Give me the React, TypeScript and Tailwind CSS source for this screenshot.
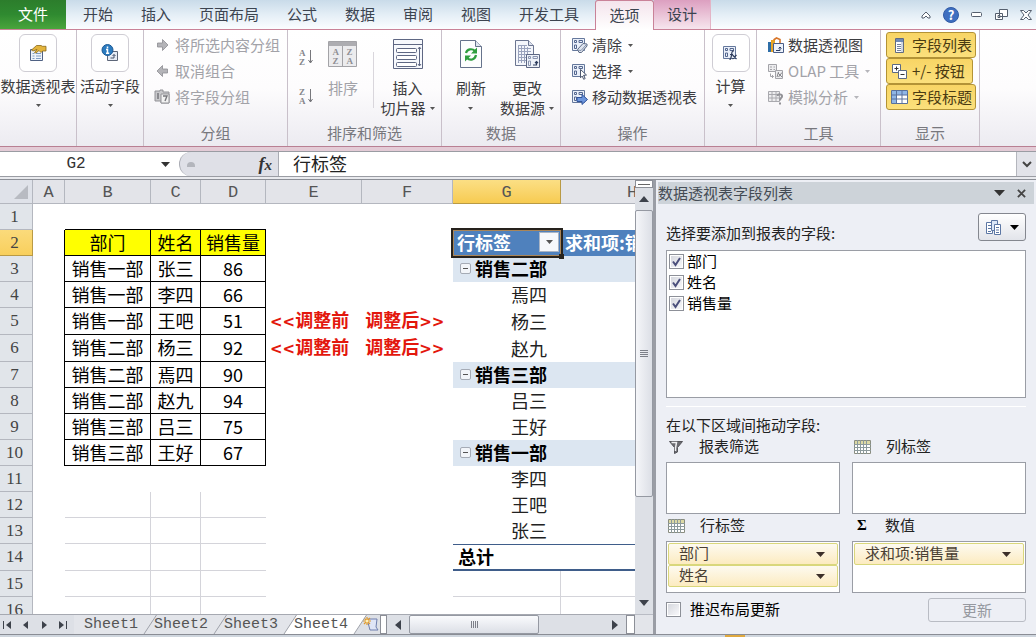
import React, { useState } from 'react';
import clsx from 'clsx';

const TABS = ['开始', '插入', '页面布局', '公式', '数据', '审阅', '视图', '开发工具'];
const SHEETS = ['Sheet1', 'Sheet2', 'Sheet3', 'Sheet4'];
const COLUMNS = ['A', 'B', 'C', 'D', 'E', 'F', 'G', 'H'];
const ROWS = Array.from({ length: 16 }, (_, i) => i + 1);

const SALES: Record<number, [string, string, string]> = {
    2: ['部门', '姓名', '销售量'],
    3: ['销售一部', '张三', '86'],
    4: ['销售一部', '李四', '66'],
    5: ['销售一部', '王吧', '51'],
    6: ['销售二部', '杨三', '92'],
    7: ['销售二部', '焉四', '90'],
    8: ['销售二部', '赵九', '94'],
    9: ['销售三部', '吕三', '75'],
    10: ['销售三部', '王好', '67'],
};

const PIVOT: Record<number, { label: string; group?: boolean }> = {
    3: { label: '销售二部', group: true },
    4: { label: '焉四' },
    5: { label: '杨三' },
    6: { label: '赵九' },
    7: { label: '销售三部', group: true },
    8: { label: '吕三' },
    9: { label: '王好' },
    10: { label: '销售一部', group: true },
    11: { label: '李四' },
    12: { label: '王吧' },
    13: { label: '张三' },
};

/* ---------- small drawings ---------- */

const Caret = ({ className = 'w-[5px] h-[3px] text-[#555]' }: { className?: string }) => (
    <svg viewBox="0 0 10 6" preserveAspectRatio="none" className={clsx('shrink-0', className)} fill="currentColor">
        <path d="M0 0h10L5 6z" />
    </svg>
);

const ArrowIcon = ({ left }: { left?: boolean }) => (
    <svg viewBox="0 0 16 16" className="w-[17px] h-4 shrink-0">
        <path
            d={left ? 'M13 6H8V2.500L2.500 8 8 13.500V10h5z' : 'M3 6h5V2.500L13.500 8 8 13.500V10H3z'}
            fill="#b4b4b8"
            stroke="#8d8d92"
            strokeWidth="0.8"
        />
    </svg>
);

const FieldGroupIcon = () => (
    <svg viewBox="0 0 17 16" className="w-[17px] h-4 shrink-0">
        <path d="M1 2h5v-1h3v2h6v11H7v-2H1z" fill="#c9c9cc" stroke="#929297" />
        <path d="M7 5h8v9H7z" fill="#f2f2f2" stroke="#929297" />
        <path d="M9 7h4l-2 5M3 5h2M3 7h2M3 9h2" stroke="#77777c" strokeWidth="1.4" fill="none" />
    </svg>
);

const PropertiesIcon = () => (
    <svg viewBox="0 0 18 18" className="w-[18px] h-[18px]">
        <path d="M1.500 5.500h12v11h-12z" fill="#eef3fa" stroke="#4f6183" />
        <path d="M3.500 9.500h2M3.500 12h2M3.500 14.500h2M7 9.500h5M7 12h5M7 14.500h5" stroke="#7f9cc4" />
        <path d="M2.500 6l5-4.500H12l1.500.8H17V7h-3.500L12 8.500l-2-2-3 2.500-1.500-.5L8 5.500 4 7z" fill="#e3b43c" stroke="#8a6a1c" strokeWidth="0.8" />
    </svg>
);

const ActiveFieldIcon = () => (
    <svg viewBox="0 0 18 18" className="w-[18px] h-[18px]">
        <path d="M6.500 7.500h10v9h-10z" fill="#e6ecf5" stroke="#5d6678" />
        <path d="M9.500 14h3.500v-3.500M11.500 12l1.500-1.500 1.500 1.500" stroke="#47536a" fill="none" />
        <circle cx="6.500" cy="6" r="5.500" fill="#2c7bbf" stroke="#1d5b96" />
        <path d="M6.500 2.500v1.800M5 5.500h1.500v3.500M5 9.300h3.200" stroke="#fff" strokeWidth="1.500" fill="none" />
    </svg>
);

const SortArrow = ({ desc }: { desc?: boolean }) => (
    <svg viewBox="0 0 16 18" className="w-4 h-[18px]">
        <g fontFamily="Liberation Serif, serif" fontWeight="bold" fontSize="9" fill="#85858b">
            <text x="1" y="7.500">{desc ? 'Z' : 'A'}</text>
            <text x="1" y="16.500">{desc ? 'A' : 'Z'}</text>
        </g>
        <path d="M12.500 2v13M10.500 12l2 3 2-3" stroke="#77777c" fill="none" />
    </svg>
);

const SortIcon = () => (
    <svg viewBox="0 0 30 28" className="w-[30px] h-7">
        <path d="M.5 1.500h28v25H.5z" fill="#ececee" stroke="#a3a3a7" />
        <path d="M1 2h27v4H1z" fill="#adadb1" />
        <path d="M14.500 6v20" stroke="#a3a3a7" />
        <g fontFamily="Liberation Serif, serif" fontWeight="bold" fontSize="9" fill="#8f8f94">
            <text x="4.500" y="14.500">A</text>
            <text x="4.500" y="24">Z</text>
            <text x="18.500" y="14.500">Z</text>
            <text x="18.500" y="24">A</text>
        </g>
    </svg>
);

const SlicerIcon = () => (
    <svg viewBox="0 0 30 32" className="w-[30px] h-8" fill="none" stroke="#5e6783">
        <path d="M.5 1.500h29v29H.5z" fill="#f7f9fd" />
        <path d="M.5 6.500h29" />
        <rect x="3.500" y="10.500" width="20" height="4" rx="1" fill="#fff" />
        <rect x="3.500" y="17.500" width="20" height="4" rx="1" fill="#fff" />
        <rect x="3.500" y="24.500" width="20" height="4" rx="1" fill="#fff" />
        <path d="M26.500 9v19M25 11l1.500-2 1.500 2M25 26l1.500 2 1.500-2" />
    </svg>
);

const RefreshIcon = () => (
    <svg viewBox="0 0 24 30" className="w-6 h-[30px]">
        <path d="M1.500 1.500h15l6 6v21h-21z" fill="#fdfefe" stroke="#66738c" />
        <path d="M16.500 1.500v6h6" fill="#dfe6f0" stroke="#66738c" />
        <path d="M7 14c1-4 6-5 9-2M17 16c-1 5-6 6-9 3" stroke="#2f9e3f" strokeWidth="2.200" fill="none" />
        <path d="M18 8.500v6h-6zM6 22.500v-6h6z" fill="#2f9e3f" />
    </svg>
);

const SourceIcon = () => (
    <svg viewBox="0 0 28 30" className="w-7 h-[30px]">
        <path d="M2.500 1.500h13l5 5v20h-18z" fill="#f4f6fb" stroke="#6b7590" />
        <path d="M15.500 1.500v5h5" fill="#dde2ee" stroke="#6b7590" />
        <path d="M5 9.500h13M5 12.500h13M5 15.500h13M5 18.500h8M5 21.500h8M5.500 6v18M8.500 6v18M11.500 6v18M14.500 8v8M5 6.500h9" stroke="#9aa3bd" />
        <path d="M13.500 15.500h13v13h-13z" fill="#eef2f9" stroke="#5d6783" />
        <path d="M15.500 17.500h2v2h-2zM20 17.500h4.500v2H20zM15.500 22h2v4.500h-2z" fill="none" stroke="#8a94b0" />
        <path d="M20 26h3.500v-3.500M22 24l1.500-1.500L25 24" stroke="#2e3d5e" strokeWidth="1.200" fill="none" />
    </svg>
);

const PivotBase = ({ gray, children }: { gray?: boolean; children?: React.ReactNode }) => (
    <svg viewBox="0 0 17 17" className="w-[17px] h-[17px] shrink-0">
        <path d="M1.500 1.500h12v12h-12z" fill={gray ? '#ededef' : '#eaf0fa'} stroke={gray ? '#a9a9ae' : '#65789c'} />
        <path
            d="M3.500 3.500h2v2h-2zM8 3.500h3.500v2H8zM3.500 8h2v3.500h-2z"
            fill="none"
            stroke={gray ? '#a9a9ae' : '#54678f'}
        />
        {children}
    </svg>
);

const ChartIcon = () => (
    <svg viewBox="0 0 17 17" className="w-[17px] h-[17px] shrink-0">
        <path d="M1 5h3v10H1z" fill="#2e6ea8" />
        <path d="M4 3h4v12H4z" fill="#e8a526" />
        <path d="M8 6h2v9H8z" fill="#52a06a" />
        <path d="M6.500 6.500h10v9h-10z" fill="#eef3fb" stroke="#4a5d86" />
        <path d="M9 13.500h4V10M11.500 11.500L13 10l1.500 1.500" stroke="#2b3d63" fill="none" />
        <path d="M6.500 3l3-2 3.500 1.500V6" stroke="#d8762a" strokeWidth="1.600" fill="none" />
    </svg>
);

const GridIcon = ({ wide }: { wide?: boolean }) => (
    <svg viewBox="0 0 17 14" className="w-[17px] h-[14px] shrink-0">
        <path d="M.5 .5h16v13H.5z" fill="#fff" stroke={wide ? '#58719c' : '#8a8d80'} />
        {wide ? (
            <>
                <path d="M1 1h15v4H1zM1 5h4v8H1z" fill="#8fb6e6" />
                <path d="M.5 5h16M.5 9h16M5.500 .5v13M11 .5v13" stroke="#58719c" />
            </>
        ) : (
            <>
                <path d="M1 1h15v3H1z" fill="#dcd9a4" />
                <path d="M0 4.500h17M0 7.500h17M0 10.500h17M3.500 0v14M6.500 0v14M9.500 0v14M12.500 0v14" stroke="#8c9a9c" />
            </>
        )}
    </svg>
);

const FieldListIcon = () => (
    <svg viewBox="0 0 17 17" className="w-[17px] h-[17px] shrink-0">
        <path d="M4.500 1.500h8v14h-8z" fill="#fdfdfd" stroke="#606b80" />
        <path d="M5 2h7v3H5z" fill="#6d88b4" />
        <path d="M6 7.500h4M6 9.500h4M6 11.500h4M6 13.500h4" stroke="#76849e" />
        <path d="M11 5v10" stroke="#a4b0c6" />
    </svg>
);

const PlusMinusIcon = () => (
    <svg viewBox="0 0 17 17" className="w-[17px] h-[17px] shrink-0" stroke="#5b6984">
        <path d="M1.500 1.500h8v8h-8z" fill="#fff" />
        <path d="M3.500 5.500h4M5.500 3.500v4" stroke="#333" />
        <path d="M7.500 7.500h8v8h-8z" fill="#fff" />
        <path d="M9.500 11.500h4" stroke="#333" />
    </svg>
);

const FunnelIcon = () => (
    <svg viewBox="0 0 16 14" className="w-4 h-[14px] shrink-0">
        <path d="M1.500 1.500h13L9.500 7.500V12l-3 1.500v-6z" fill="#6c6c72" stroke="#55555a" />
        <path d="M3.500 2.500h5L7.500 8v3" stroke="#f0f0f2" strokeWidth="1.500" fill="none" />
    </svg>
);

/* ---------- ribbon ---------- */

const Group = ({ label, className, children }: { label?: string; className: string; children: React.ReactNode }) => (
    <section className={clsx('flex flex-col shrink-0 border-r border-[#c9c0ca] pt-[2px]', className)}>
        <div className="flex-1">{children}</div>
        {label && <div className="h-6 text-center leading-[22px] text-[#77777d]">{label}</div>}
    </section>
);

const LargeMenu = ({ label, icon }: { label: string; icon: React.ReactNode }) => (
    <button className="w-full flex flex-col items-center pt-[2px]">
        <span className="w-[38px] h-[38px] flex items-center justify-center rounded-md border border-[#cfcdd4] bg-white">{icon}</span>
        <span className="leading-7 mb-1 whitespace-nowrap">{label}</span>
        <Caret />
    </button>
);

interface RowButtonProps {
    icon: React.ReactNode;
    label: string;
    disabled?: boolean;
    menu?: boolean;
}

const RowButton = ({ icon, label, disabled, menu }: RowButtonProps) => (
    <button disabled={disabled} className="h-[26px] flex items-center gap-1 whitespace-nowrap disabled:text-[#a2a2a8]">
        {icon}
        <span>{label}</span>
        {menu && <Caret className={clsx('ml-[2px] w-[5px] h-[3px]', disabled ? 'text-[#b5b5ba]' : 'text-[#555]')} />}
    </button>
);

const ToggleButton = ({ icon, label, className }: { icon: React.ReactNode; label: string; className: string }) => (
    <button
        aria-pressed="true"
        className={clsx(
            'h-[26px] flex items-center gap-1 pl-1 rounded-[3px] border border-[#b39336] bg-linear-to-b from-[#f8d565] to-[#fbe07c] text-[#4a3b12] whitespace-nowrap',
            className
        )}
    >
        {icon}
        <span>{label}</span>
    </button>
);

const Ribbon = () => (
    <div className="h-[116px] shrink-0 flex overflow-hidden bg-linear-to-b from-white via-[#fdfcfd] to-[#ecebf1] text-[#3c3c40]">
        <Group className="w-[77px]">
            <LargeMenu label="数据透视表" icon={<PropertiesIcon />} />
        </Group>
        <Group className="w-[67px]">
            <LargeMenu label="活动字段" icon={<ActiveFieldIcon />} />
        </Group>
        <Group label="分组" className="w-[144px]">
            <div className="pl-[10px]">
                <RowButton disabled icon={<ArrowIcon />} label="将所选内容分组" />
                <RowButton disabled icon={<ArrowIcon left />} label="取消组合" />
                <RowButton disabled icon={<FieldGroupIcon />} label="将字段分组" />
            </div>
        </Group>
        <Group label="排序和筛选" className="w-[154px]">
            <div className="flex h-full">
                <div className="w-9 pt-4 flex flex-col items-center gap-[21px]">
                    <button aria-label="升序"><SortArrow /></button>
                    <button aria-label="降序"><SortArrow desc /></button>
                </div>
                <button disabled className="w-[38px] pt-2 flex flex-col items-center text-[#a2a2a8]">
                    <SortIcon />
                    <span className="leading-5 mt-[10px] whitespace-nowrap">排序</span>
                </button>
                <div className="ml-[11px] mt-5 h-14 w-px bg-[#d9d6dc]" />
                <button className="flex-1 pt-[6px] flex flex-col items-center">
                    <SlicerIcon />
                    <span className="leading-5 mt-2">插入</span>
                    <span className="leading-5 flex items-center gap-1 whitespace-nowrap">切片器 <Caret /></span>
                </button>
            </div>
        </Group>
        <Group label="数据" className="w-[119px]">
            <div className="flex h-full">
                <button className="w-[58px] pt-[7px] flex flex-col items-center">
                    <RefreshIcon />
                    <span className="leading-5 mt-[9px]">刷新</span>
                    <span className="h-5 flex items-center"><Caret /></span>
                </button>
                <button className="flex-1 pt-[7px] pr-[6px] flex flex-col items-center">
                    <SourceIcon />
                    <span className="leading-5 mt-[9px]">更改</span>
                    <span className="leading-5 flex items-center gap-1 whitespace-nowrap">数据源 <Caret /></span>
                </button>
            </div>
        </Group>
        <Group label="操作" className="w-[144px]">
            <div className="pl-[10px]">
                <RowButton
                    menu
                    label="清除"
                    icon={<PivotBase><path d="M6.500 12.500l5.500-6 4 .5v2l-5.500 6.500H8z" fill="#dfe5ef" stroke="#5d6a84" /><path d="M7 13l3 .5 5.500-6" stroke="#8290aa" fill="none" /></PivotBase>}
                />
                <RowButton
                    menu
                    label="选择"
                    icon={<PivotBase><path d="M9.500 6.500l6 5.500-3 .3 1.700 3.200-1.500.8-1.500-3.200-1.700 1.700z" fill="#fff" stroke="#4d586f" /></PivotBase>}
                />
                <RowButton
                    label="移动数据透视表"
                    icon={<PivotBase><path d="M6 8.500h5V5.500l5.500 5-5.500 5v-3H6z" fill="#6d96dd" stroke="#31549c" /></PivotBase>}
                />
            </div>
        </Group>
        <Group className="w-[52px]">
            <LargeMenu
                label="计算"
                icon={<PivotBase><path d="M12 6c-2-.5-2 1-2.500 4s-.5 4.500-2 4.500M8 9.500h3M10.500 10l4 4M14.500 10l-4 4" stroke="#2f3d5c" strokeWidth="1.200" fill="none" /></PivotBase>}
            />
        </Group>
        <Group label="工具" className="w-[124px]">
            <div className="pl-[10px]">
                <RowButton icon={<ChartIcon />} label="数据透视图" />
                <RowButton
                    disabled
                    menu
                    label="OLAP 工具"
                    icon={
                        <svg viewBox="0 0 17 17" className="w-[17px] h-[17px] shrink-0" fill="#ededef" stroke="#a3a3a8">
                            <path d="M1.500 1.500h8v7h-8zM3 4h2M6.500 4H8M3 6.500h2M6.500 6.500H8" />
                            <path d="M3.500 10.500v3h3M5 12l1.500 1.500L5 15" fill="none" />
                            <path d="M8.500 7.500h7v8h-7z" />
                            <path d="M10 14l1.500-5M11 10l4 4M15 9.500L11.500 14" stroke="#85858a" fill="none" />
                        </svg>
                    }
                />
                <RowButton
                    disabled
                    menu
                    label="模拟分析"
                    icon={
                        <svg viewBox="0 0 17 17" className="w-[17px] h-[17px] shrink-0" fill="none" stroke="#a9a9ae">
                            <path d="M1.500 2.500h11v10h-11z" fill="#ededef" />
                            <path d="M1.500 5.500h11M1.500 9h11M5 2.500v10M9 2.500v10" />
                            <path d="M10.500 7c.5-2.500 5-2 4.500.5-.3 1.500-2 1.700-2 4M13 13.500v2" stroke="#929297" strokeWidth="2" />
                        </svg>
                    }
                />
            </div>
        </Group>
        <Group label="显示" className="w-[99px]">
            <div className="pl-[5px]">
                <ToggleButton className="w-[90px]" icon={<FieldListIcon />} label="字段列表" />
                <ToggleButton className="w-[87px]" icon={<PlusMinusIcon />} label="+/- 按钮" />
                <ToggleButton className="w-[90px]" icon={<GridIcon wide />} label="字段标题" />
            </div>
        </Group>
    </div>
);

const TabBar = () => (
    <header className="h-[30px] shrink-0 flex border-b border-[#c98298] bg-linear-to-b from-[#c9dbe9] via-[#e4eef6] to-[#fbfdff] text-[#3c4450]">
        <button className="w-[66px] mr-[3px] text-white bg-linear-to-b from-[#2c7d2c] via-[#2f8a30] to-[#49a53c]">文件</button>
        {TABS.map(t => <button key={t} className="px-[14px] whitespace-nowrap">{t}</button>)}
        <button className="w-[59px] ml-[2px] -mb-px rounded-t-[3px] border border-b-0 border-[#c98298] bg-linear-to-b from-[#f4e4ec] to-white">选项</button>
        <button className="w-[57px] border-r border-[#e3b4c6] bg-linear-to-b from-[#dc9fc0] to-[#f6e6ee]">设计</button>
        <div className="ml-auto flex items-center gap-3 pr-1">
            <button aria-label="折叠功能区">
                <svg viewBox="0 0 10 8" className="w-[10px] h-2"><path d="M1 5l4-4 4 4v2H7L5 5 3 7H1z" fill="#fff" stroke="#555f6e" /></svg>
            </button>
            <button aria-label="帮助" className="w-4 h-4 rounded-full bg-[#3f6fc0] border border-[#315ba6] text-white text-[13px] leading-[14px] font-bold">?</button>
            <button aria-label="最小化">
                <svg viewBox="0 0 12 6" className="w-3 h-[6px]"><rect x=".5" y=".5" width="10" height="4" rx="1" fill="#fff" stroke="#555f6e" /></svg>
            </button>
            <button aria-label="还原">
                <svg viewBox="0 0 13 12" className="w-[13px] h-3" fill="#fff" stroke="#555f6e"><path d="M4.500 .5h8v7h-8zM.5 4.500h7v6h-7zM3 6.500h2v2H3z" /></svg>
            </button>
            <button aria-label="关闭">
                <svg viewBox="0 0 12 10" className="w-3 h-[10px]" fill="#fff" stroke="#555f6e"><path d="M.5 .5h3L6 3 8.500.5h3L8 5l3.500 4.500h-3L6 7 3.500 9.500h-3L4 5z" /></svg>
            </button>
        </div>
    </header>
);

const FormulaBar = () => (
    <div className="h-[26px] shrink-0 flex border-y border-[#9a9ca3] bg-white">
        <input aria-label="名称框" defaultValue="G2" className="w-[152px] text-center text-[16px] font-['Liberation_Mono',monospace] text-[#333] outline-none" />
        <button aria-label="名称列表" className="w-[27px] flex items-center justify-center"><Caret className="w-[9px] h-[5px] text-[#333]" /></button>
        <div className="w-[100px] flex items-center justify-between pl-[7px] pr-[6px] rounded-l-full border border-y-0 border-[#a9abb3] bg-[#dfe0e7]">
            <span className="w-2 h-[5px] rounded-t-full bg-[#b3b5bc]" />
            <button aria-label="插入函数" className="font-['Liberation_Serif',serif] italic font-bold text-[18px] leading-5 text-[#333]">
                f<span className="text-[15px]">x</span>
            </button>
        </div>
        <input aria-label="编辑栏" defaultValue="行标签" className="flex-1 min-w-0 pl-[14px] pb-[2px] text-[18px] text-[#222] outline-none" />
        <button aria-label="展开编辑栏" className="w-5 flex items-center justify-center border-l border-[#b4b6bd] bg-[#e2e3e9]">
            <svg viewBox="0 0 10 7" className="w-[10px] h-[7px]"><path d="M1 1l4 4 4-4" stroke="#444" strokeWidth="2" fill="none" /></svg>
        </button>
    </div>
);

/* ---------- worksheet ---------- */

const leftCells = (r: number) => {
    const sale = SALES[r];
    if (sale) {
        return sale.map((v, i) => (
            <td key={i} className={clsx('border-r border-b border-black text-center text-black', r === 2 && 'bg-[#ffff00]')}>{v}</td>
        ));
    }
    const grid = r >= 12;
    return [0, 1, 2].map(i => (
        <td
            key={i}
            className={clsx(
                r === 1 && 'border-b border-black',
                grid && 'border-b border-[#d4d4da]',
                grid && i < 2 && 'border-r'
            )}
        />
    ));
};

const pivotCells = (r: number) => {
    if (r === 2) {
        return (
            <>
                <td className="relative bg-[#4f81bd] text-white font-bold">
                    <div className="absolute -inset-x-[2px] -inset-y-[2px] border-2 border-[#26221d] pointer-events-none z-10">
                        <div className="h-full border border-[#a98558]" />
                        <span className="absolute -right-[3px] -bottom-[3px] w-[5px] h-[5px] bg-[#26221d]" />
                    </div>
                    <div className="flex items-center justify-between pl-1 pr-[2px]">
                        行标签
                        <button aria-label="筛选" className="w-5 h-5 flex items-center justify-center bg-[#f6f8fb] border border-[#a9b4c4]">
                            <Caret className="w-[7px] h-1 text-[#555]" />
                        </button>
                    </div>
                </td>
                <td className="bg-[#4f81bd] text-white font-bold pl-1 whitespace-nowrap">求和项:销售量</td>
            </>
        );
    }
    if (r === 14) {
        return (
            <>
                <td className="border-t border-b-2 border-[#3f5d8a] pl-[5px] font-bold text-black">总计</td>
                <td className="border-t border-b-2 border-[#3f5d8a]" />
            </>
        );
    }
    const item = PIVOT[r];
    if (!item) {
        return (
            <>
                <td className={clsx(r > 14 && 'border-r border-b border-[#d4d4da]')} />
                <td className={clsx(r > 14 && 'border-b border-[#d4d4da]')} />
            </>
        );
    }
    if (item.group) {
        return (
            <>
                <td className="bg-[#dce6f1] font-bold text-black">
                    <div className="flex items-center gap-1 pl-[7px]">
                        <button aria-label="折叠" className="w-[11px] h-[11px] flex items-center justify-center rounded-[2px] border border-[#a5abb5] bg-[#f2f5f9]">
                            <span className="w-[5px] h-px bg-[#555]" />
                        </button>
                        {item.label}
                    </div>
                </td>
                <td className="bg-[#dce6f1]" />
            </>
        );
    }
    return (
        <>
            <td className="pl-[58px] text-[#222]">{item.label}</td>
            <td />
        </>
    );
};

const Grid = () => (
    <div className="flex-1 min-h-0 overflow-hidden bg-white">
        <table className="w-[704px] table-fixed border-separate border-spacing-0 text-[18px] leading-[22px] [&_td]:pb-[2px]">
            <colgroup>
                <col className="w-[33px]" />
                <col className="w-8" />
                <col className="w-[86px]" />
                <col className="w-[50px]" />
                <col className="w-[65px]" />
                <col className="w-24" />
                <col className="w-[91px]" />
                <col className="w-[108px]" />
                <col className="w-[143px]" />
            </colgroup>
            <thead>
                <tr className="h-6 text-[17px] leading-[20px] font-['Liberation_Mono',monospace] text-[#555]">
                    <th className="border-r border-b border-[#b4b7bf] bg-[#dfe2e9]">
                        <svg viewBox="0 0 12 12" className="w-[14px] h-[14px] ml-auto mr-1"><path d="M12 0v12H0z" fill="#b8bbc2" /></svg>
                    </th>
                    {COLUMNS.map(c => (
                        <th
                            key={c}
                            scope="col"
                            className={clsx(
                                'border-r border-b pt-[3px] font-normal',
                                c === 'G' ? 'border-[#b99a45] bg-linear-to-b from-[#fbdf84] to-[#f7cb50]' : 'border-[#b4b7bf] bg-[#e3e4e9]'
                            )}
                        >
                            {c}
                        </th>
                    ))}
                </tr>
            </thead>
            <tbody>
                {ROWS.map(r => (
                    <tr key={r} className={r === 5 ? 'h-[27px]' : 'h-[26px]'}>
                        <th
                            scope="row"
                            className={clsx(
                                "border-r border-b pr-[3px] font-normal text-[17px] font-['Liberation_Serif',serif] text-[#444]",
                                r === 2 ? 'border-[#b99a45] bg-linear-to-b from-[#fbdb7b] to-[#f8cf5c]' : 'border-[#b4b7bf] bg-[#e1e5ea]'
                            )}
                        >
                            {r}
                        </th>
                        <td className={clsx(SALES[r] && 'border-r border-black')} />
                        {leftCells(r)}
                        {r === 5 || r === 6 ? (
                            <td colSpan={2} className="pl-1 font-bold text-[#e3170d]">
                                <div className="flex gap-4 whitespace-nowrap">
                                    <span><span className="text-[15px] font-['DejaVu_Sans',sans-serif]">&lt;&lt;</span>调整前</span>
                                    <span>调整后<span className="text-[15px] font-['DejaVu_Sans',sans-serif]">&gt;&gt;</span></span>
                                </div>
                            </td>
                        ) : (
                            <>
                                <td />
                                <td />
                            </>
                        )}
                        {pivotCells(r)}
                    </tr>
                ))}
            </tbody>
        </table>
    </div>
);

const NAV_PATHS: [string, string][] = [
    ['第一张', 'M1 1v8h1V1zM9 1v8L4 5z'],
    ['上一张', 'M7 1v8L2 5z'],
    ['下一张', 'M3 1v8l5-4z'],
    ['最后一张', 'M1 1v8l5-4zM8 1v8h1V1z'],
];

const SheetBar = () => {
    const [sheet, setSheet] = useState('Sheet4');

    return (
        <div className="h-5 shrink-0 flex border-t border-[#a6a9b1] bg-[#dde0e6]">
            <div className="w-[74px] flex items-center justify-between pl-[2px] pr-[6px]">
                {NAV_PATHS.map(([name, d]) => (
                    <button key={name} aria-label={name}>
                        <svg viewBox="0 0 10 10" className="w-[10px] h-[10px]"><path d={d} fill="#3d424b" /></svg>
                    </button>
                ))}
            </div>
            {SHEETS.map(s => (
                <button
                    key={s}
                    onClick={() => setSheet(s)}
                    className={clsx(
                        "relative w-[70px] pl-[10px] text-left leading-[19px] text-[#555] font-['Liberation_Mono',monospace]",
                        s === sheet ? 'bg-white' : 'bg-[#e3e5ea]'
                    )}
                >
                    {s}
                    <svg viewBox="0 0 14 19" className="absolute -right-[13px] top-0 w-[14px] h-[19px] z-10">
                        <path d="M0 0h13.500L1 19H0z" fill={s === sheet ? '#fff' : '#e3e5ea'} />
                        <path d="M13.500 0L1 19" stroke="#9ea2aa" fill="none" />
                    </svg>
                </button>
            ))}
            <button aria-label="插入工作表" className="w-[26px] flex items-center justify-end">
                <svg viewBox="0 0 18 17" className="w-[18px] h-[17px]">
                    <path d="M5 3h10l-1 8 2 3H8z" fill="#dfe5f6" stroke="#6f7fae" />
                    <path d="M5 1v8M1 5h8M2 2l6 6M8 2L2 8" stroke="#e29a2b" strokeWidth="1.200" />
                    <circle cx="5" cy="5" r="1.500" fill="#fff1b8" />
                </svg>
            </button>
            <div className="w-[7px] border border-[#8c8f97] bg-white" />
            <button aria-label="向左滚动" className="w-[22px] flex items-center justify-center">
                <svg viewBox="0 0 6 10" className="w-[6px] h-[10px]"><path d="M6 0v10L0 5z" fill="#3d424b" /></svg>
            </button>
            <div className="flex-1 flex">
                <div className="w-[130px] flex items-center justify-center gap-[1px] rounded-[2px] border border-[#9599a2] bg-linear-to-b from-[#fafbfd] to-[#dcdfe6]">
                    {[0, 1, 2, 3].map(i => <span key={i} className="w-px h-[7px] bg-[#7d8089]" />)}
                </div>
            </div>
            <button aria-label="向右滚动" className="w-[22px] flex items-center justify-center">
                <svg viewBox="0 0 6 10" className="w-[6px] h-[10px]"><path d="M0 0v10l6-5z" fill="#3d424b" /></svg>
            </button>
            <div className="w-[9px] border border-[#8c8f97] bg-white" />
        </div>
    );
};

const VerticalScroll = () => (
    <div className="w-[19px] shrink-0 flex flex-col items-center border-r border-[#9a9da5] bg-[#dde0e6]">
        <div className="w-full h-[8px] border border-[#8c8f97] bg-white flex items-center justify-center">
            <span className="w-3 h-px bg-[#666]" />
        </div>
        <button aria-label="向上滚动" className="h-[22px] flex items-center">
            <svg viewBox="0 0 10 6" className="w-[10px] h-[6px]"><path d="M0 6h10L5 0z" fill="#3d424b" /></svg>
        </button>
        <div className="w-full flex-1">
            <div className="w-full h-3/4 flex flex-col items-center justify-center gap-[1px] rounded-[2px] border border-[#9599a2] bg-linear-to-r from-[#f5f6f9] to-[#dcdfe6]">
                {[0, 1, 2, 3].map(i => <span key={i} className="w-2 h-px bg-[#7d8089]" />)}
            </div>
        </div>
        <button aria-label="向下滚动" className="h-[22px] flex items-center"><Caret className="w-[10px] h-[6px] text-[#3d424b]" /></button>
        <div className="w-full h-5 border-t border-[#b9bcc4] bg-[#e3e5ea]" />
    </div>
);

/* ---------- field list pane ---------- */

const Check = ({ label, checked, className }: { label: string; checked?: boolean; className: string }) => (
    <label className={clsx('flex items-center text-black', className)}>
        <span className="grid">
            <input
                type="checkbox"
                defaultChecked={checked}
                className="peer col-start-1 row-start-1 appearance-none w-[15px] h-[15px] border border-[#8d9098] bg-linear-to-br from-[#d3d5dc] to-[#fbfbfd] shadow-[inset_0_0_0_1px_#fff]"
            />
            <svg viewBox="0 0 15 15" className="col-start-1 row-start-1 w-[15px] h-[15px] hidden peer-checked:block pointer-events-none">
                <path d="M4 7.500L6.500 11 11 4" stroke="#4b4f7c" strokeWidth="2" fill="none" />
            </svg>
        </span>
        <span className="leading-5 pb-[2px]">{label}</span>
    </label>
);

const FieldChip = ({ label }: { label: string }) => (
    <button className="h-[22px] flex items-center justify-between pl-[10px] pr-3 rounded-[2px] border border-[#d9d77c] bg-linear-to-b from-[#fdfaf0] to-[#fcebc0] text-[#4a3f33] whitespace-nowrap">
        <span className="leading-5 pb-[2px]">{label}</span>
        <Caret className="w-[9px] h-[5px] text-[#3c302a]" />
    </button>
);

const Area = ({ icon, label, fields = [] }: { icon: React.ReactNode; label: string; fields?: string[] }) => (
    <div>
        <div className="h-[27px] flex items-center gap-[15px] pl-[2px] pb-1">
            {icon}
            <span className="leading-5 pb-[2px]">{label}</span>
        </div>
        <div className="h-[52px] flex flex-col p-px border border-[#9a9da5] bg-white">
            {fields.map(f => <FieldChip key={f} label={f} />)}
        </div>
    </div>
);

const FieldPane = () => (
    <aside className="w-[382px] shrink-0 flex flex-col border-l-2 border-[#9a9da5] bg-[#edeff5] text-[#222]">
        <div className="h-[22px] mt-[2px] mx-[2px] shrink-0 flex items-center pr-2 bg-[#cdd3d9] text-[#444b54]">
            <h2 className="flex-1 leading-[22px]">数据透视表字段列表</h2>
            <button aria-label="窗格选项" className="mr-3"><Caret className="w-[11px] h-[6px] text-[#333]" /></button>
            <button aria-label="关闭窗格">
                <svg viewBox="0 0 10 10" className="w-[9px] h-[9px]"><path d="M1 1l8 8M9 1L1 9" stroke="#444" strokeWidth="2" /></svg>
            </button>
        </div>
        <div className="flex-1 min-h-0 flex flex-col pl-[10px] pr-[10px]">
            <div className="h-[46px] shrink-0 flex items-end justify-between">
                <span className="leading-5 pb-[7px]">选择要添加到报表的字段:</span>
                <button aria-label="布局" className="w-12 h-7 mb-[9px] flex items-center justify-center gap-2 rounded-[3px] border border-[#84878f] bg-linear-to-b from-white to-[#e2e4ea]">
                    <svg viewBox="0 0 17 17" className="w-[17px] h-[17px]" fill="#fff" stroke="#5c77a4">
                        <path d="M1.500 3.500h6v11h-6z" />
                        <path d="M6.500 1.500h6v10h-6z" fill="#dbe7f7" />
                        <path d="M9.500 5.500h6v10h-6z" />
                        <path d="M3 6.500h3M3 9.500h3M3 12.500h3M11 8.500h3M11 11h3M11 13.500h3" />
                    </svg>
                    <Caret className="w-[9px] h-[5px] text-black" />
                </button>
            </div>
            <div className="flex-1 min-h-0 pl-[2px] border border-[#9a9da5] bg-white">
                <Check checked label="部门" className="h-[21px] gap-[3px]" />
                <Check checked label="姓名" className="h-[21px] gap-[3px]" />
                <Check checked label="销售量" className="h-[21px] gap-[3px]" />
            </div>
            <div className="mt-2 mb-2 h-px shrink-0 bg-white" />
            <div className="h-5 shrink-0 leading-5">在以下区域间拖动字段:</div>
            <div className="grid grid-cols-2 gap-x-3">
                <Area icon={<FunnelIcon />} label="报表筛选" />
                <Area icon={<GridIcon />} label="列标签" />
                <Area icon={<GridIcon />} label="行标签" fields={['部门', '姓名']} />
                <Area
                    icon={<span className="w-4 text-center font-['Liberation_Serif',serif] font-bold text-black">Σ</span>}
                    label="数值"
                    fields={['求和项:销售量']}
                />
            </div>
            <div className="h-[41px] shrink-0 flex items-center justify-between pb-2">
                <Check label="推迟布局更新" className="gap-[9px]" />
                <button disabled className="w-[98px] h-6 rounded-[3px] border border-[#b9bcc4] leading-5 text-[#9699a0]">更新</button>
            </div>
        </div>
    </aside>
);

const App: React.FC = () => (
    <div className="h-screen flex flex-col overflow-hidden bg-[#e6e7ec] text-[15px] font-['Noto_Sans_CJK_SC',sans-serif]">
        <TabBar />
        <Ribbon />
        <div className="h-[5px] shrink-0 border-t border-[#b97f93] bg-[#e3cbd6]" />
        <FormulaBar />
        <div className="h-[3px] shrink-0 border-b border-[#8c8f97] bg-[#e9eaee]" />
        <main className="flex-1 min-h-0 flex">
            <div className="flex-1 min-w-0 flex flex-col">
                <Grid />
                <SheetBar />
            </div>
            <VerticalScroll />
            <FieldPane />
        </main>
        <footer className="h-[3px] shrink-0 flex border-t border-[#8a8d95] bg-[#cfd6de]">
            <span className="ml-[70%] w-5 bg-[#e0a93f]" />
        </footer>
    </div>
);

export default App;
